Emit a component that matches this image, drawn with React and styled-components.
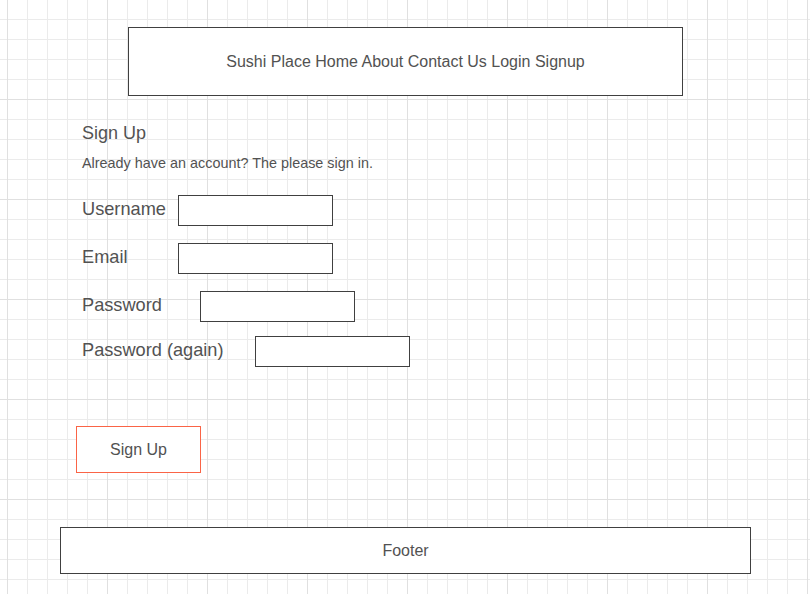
import React from 'react';
import styled, { createGlobalStyle } from 'styled-components';

const GlobalStyle = createGlobalStyle`
  html, body {
    margin: 0;
    min-height: 100%;
  }
  html {
    background-color: #ffffff;
    background-image:
      linear-gradient(to right, #e0e0e0 1px, transparent 1px),
      linear-gradient(to bottom, #e0e0e0 1px, transparent 1px),
      linear-gradient(to right, #ebebeb 1px, transparent 1px),
      linear-gradient(to bottom, #ebebeb 1px, transparent 1px);
    background-size: 100px 100px, 100px 100px, 20px 20px, 20px 20px;
    background-position: 7px 99px;
  }
  body {
    font-family: 'Liberation Sans', Arial, sans-serif;
    color: #525252;
  }
`;

const fields = [
  { label: 'Username', labelWidth: 96, top: 24 },
  { label: 'Email', labelWidth: 96, top: 17, type: 'email' },
  { label: 'Password', labelWidth: 118, top: 17, type: 'password' },
  { label: 'Password (again)', labelWidth: 173, top: 14, type: 'password' },
];

const App = () => {
  return (
    <Page>
      <GlobalStyle />
      <Nav>Sushi Place Home About Contact Us Login Signup</Nav>
      <Main>
        <Heading>Sign Up</Heading>
        <Sub>Already have an account? The please sign in.</Sub>
        {fields.map((f) => (
          <Field key={f.label} $top={f.top}>
            <Label $width={f.labelWidth}>{f.label}</Label>
            <Input type={f.type || 'text'} />
          </Field>
        ))}
        <Button>Sign Up</Button>
      </Main>
      <Footer>Footer</Footer>
    </Page>
  );
};

export default App;

const Page = styled.div`
  width: 810px;
  height: 594px;
  padding-top: 27px;
  box-sizing: border-box;
`;

const Nav = styled.nav`
  box-sizing: border-box;
  margin-left: 128px;
  width: 555px;
  height: 69px;
  border: 1px solid #404040;
  background: #fff;
  display: flex;
  align-items: center;
  justify-content: center;
  font-size: 16px;
`;

const Main = styled.main`
  padding-left: 82px;
  display: flex;
  flex-direction: column;
  align-items: flex-start;
`;

const Heading = styled.h2`
  margin: 27px 0 0;
  font-size: 18px;
  font-weight: normal;
  line-height: 20px;
`;

const Sub = styled.p`
  margin: 12px 0 0;
  font-size: 14.4px;
  line-height: 16px;
`;

const Field = styled.div`
  display: flex;
  align-items: center;
  height: 31px;
  margin-top: ${(p) => p.$top}px;
`;

const Label = styled.label`
  width: ${(p) => p.$width}px;
  font-size: 18.2px;
  line-height: 20px;
  margin-top: -3px;
`;

const Input = styled.input`
  box-sizing: border-box;
  width: 155px;
  height: 31px;
  margin: 0;
  border: 1px solid #404040;
  border-radius: 0;
  background: #fff;
  outline: none;
  padding: 0 6px;
  font-family: inherit;
`;

const Button = styled.button`
  box-sizing: border-box;
  margin: 59px 0 0 -6px;
  width: 125px;
  height: 47px;
  border: 1px solid #fa6446;
  background: #fff;
  color: #525252;
  font-family: inherit;
  font-size: 16px;
  padding: 0;
  cursor: pointer;
`;

const Footer = styled.footer`
  box-sizing: border-box;
  margin: 54px 0 0 60px;
  width: 691px;
  height: 47px;
  border: 1px solid #404040;
  background: #fff;
  display: flex;
  align-items: center;
  justify-content: center;
  font-size: 16px;
`;
